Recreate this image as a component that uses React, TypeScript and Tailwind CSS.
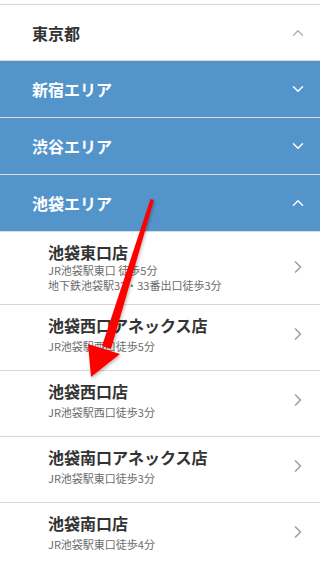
import { ChevronDown, ChevronRight, ChevronUp } from 'lucide-react';

const font = { fontFamily: '"Noto Sans CJK JP", "Noto Sans", sans-serif' };

const areas = [
  { name: '新宿エリア', open: false },
  { name: '渋谷エリア', open: false },
  { name: '池袋エリア', open: true },
];

const shops = [
  { name: '池袋東口店', access: ['JR池袋駅東口 徒歩5分', '地下鉄池袋駅32・33番出口徒歩3分'] },
  { name: '池袋西口アネックス店', access: ['JR池袋駅西口徒歩5分'] },
  { name: '池袋西口店', access: ['JR池袋駅西口徒歩3分'] },
  { name: '池袋南口アネックス店', access: ['JR池袋駅東口徒歩3分'] },
  { name: '池袋南口店', access: ['JR池袋駅東口徒歩4分'] },
];

const ShopRow = ({ name, access }: { name: string; access: string[] }) => {
  const multi = access.length > 1;
  return (
    <a
      href="#"
      className={`flex items-start justify-between border-b border-[#d9d9d9] pl-12 pr-[12px] pt-[9px] ${
        multi ? 'pb-[11px]' : 'pb-[16px]'
      }`}
    >
      <div>
        <p className="text-[16px] leading-[22px] font-bold text-[#333]">{name}</p>
        <div className={multi ? 'mt-0' : 'mt-[3px]'}>
          {access.map((a) => (
            <p key={a} className="text-[11px] leading-[15px] text-[#6b6b6b]">
              {a}
            </p>
          ))}
        </div>
      </div>
      <ChevronRight size={20} strokeWidth={2} className="text-[#a0a0a0] self-center" />
    </a>
  );
};

const RedArrow = () => (
  <svg
    className="absolute left-0 top-0 pointer-events-none"
    width="320"
    height="567"
    viewBox="0 0 320 567"
  >
    <defs>
      <filter id="sh" x="-20%" y="-20%" width="140%" height="140%">
        <feDropShadow dx="1" dy="2" stdDeviation="1.5" floodColor="#000" floodOpacity="0.25" />
      </filter>
    </defs>
    <g fill="#ff0000" filter="url(#sh)">
      <polygon points="150.5,199 154,200 111,349 102,346" />
      <polygon points="88,344 120,354 91,377" />
    </g>
  </svg>
);

export default function App() {
  return (
    <div className="relative w-[320px] h-[567px] overflow-hidden bg-white" style={font}>
      <div className="mt-1 border-t border-[#d9d9d9]">
        <div className="flex h-[56px] items-center justify-between border-b border-[#d9d9d9] pl-8 pr-[13px]">
          <span className="text-[16px] font-bold text-[#333]">東京都</span>
          <ChevronUp size={18} strokeWidth={1.6} className="text-[#aaa]" />
        </div>
        {areas.map((a) => (
          <div
            key={a.name}
            className="flex h-[57px] items-center justify-between border-b border-[#dcdcdc] bg-[#5394cb] pl-8 pr-[13px]"
          >
            <span className="text-[16px] font-bold text-white">{a.name}</span>
            {a.open ? (
              <ChevronUp size={18} strokeWidth={2} className="text-white" />
            ) : (
              <ChevronDown size={18} strokeWidth={2} className="text-white" />
            )}
          </div>
        ))}
        {shops.map((s) => (
          <ShopRow key={s.name} name={s.name} access={s.access} />
        ))}
      </div>
      <RedArrow />
    </div>
  );
}
